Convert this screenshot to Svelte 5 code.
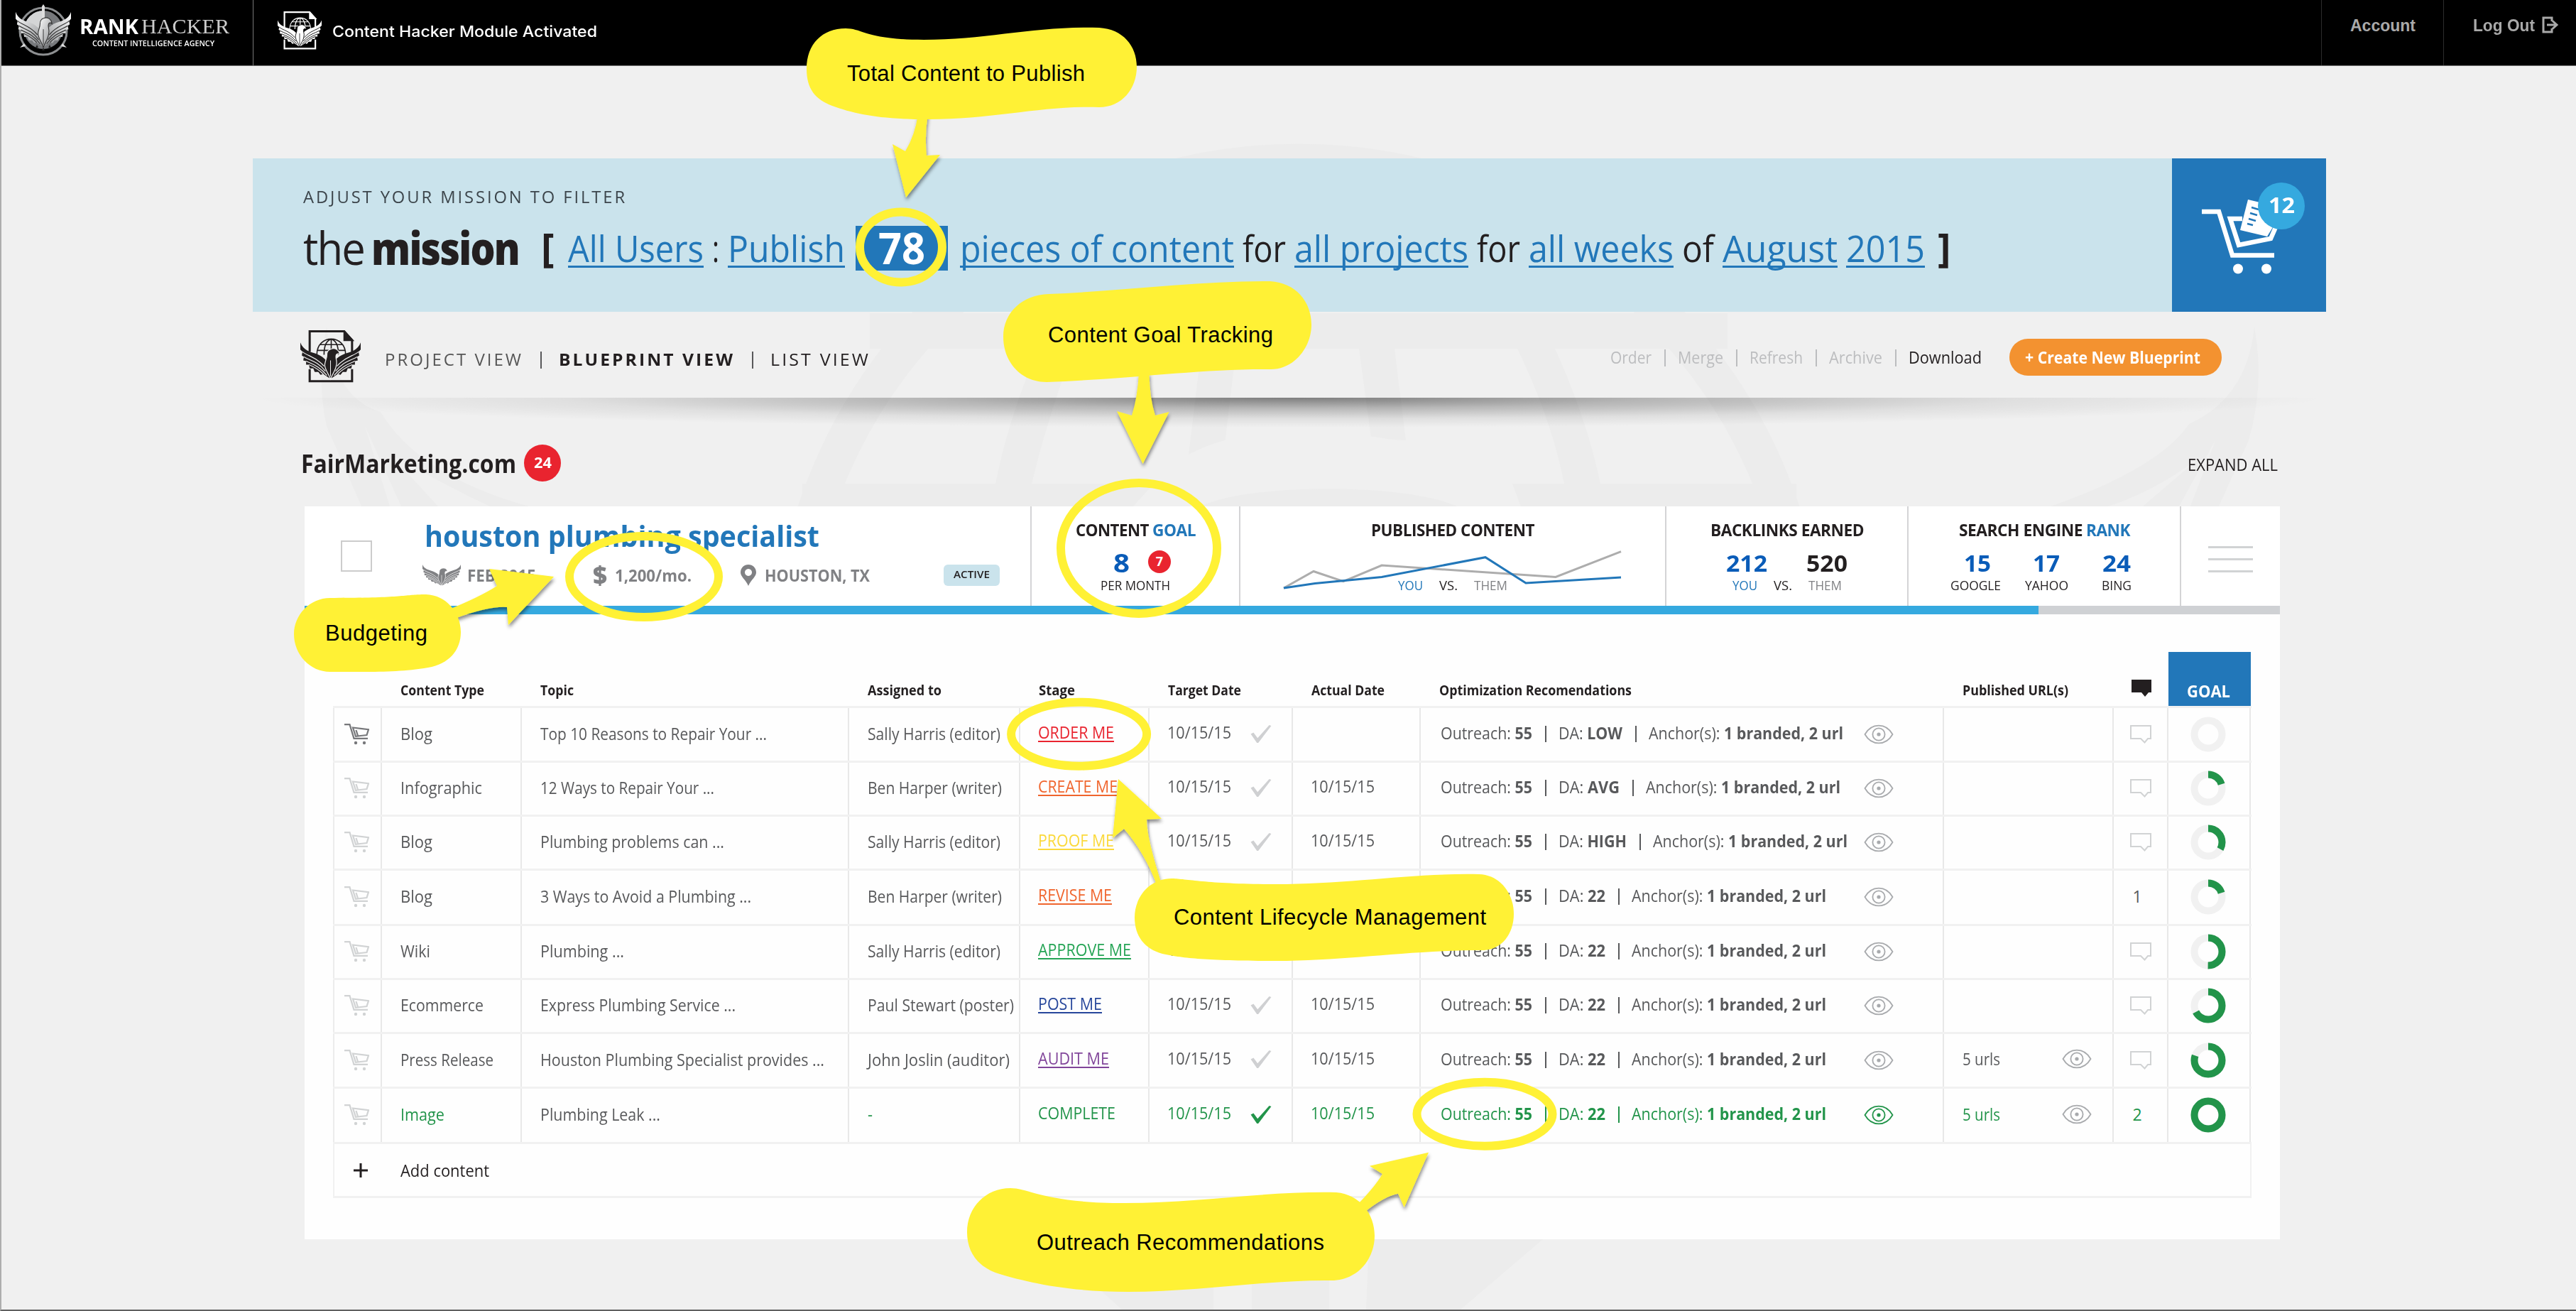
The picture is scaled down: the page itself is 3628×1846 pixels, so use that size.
<script>
  // Condenses a run of text horizontally so that it fills the given width.
  function fit(node, width) {
    node.style.width = 'max-content';
    const natural = node.getBoundingClientRect().width;
    node.style.width = `${width}px`;
    node.style.transform = `scaleX(${width / natural})`;
  }

  const mission = [
    { text: 'All Users', w: 191, link: true },
    { text: ':', w: 10 },
    { text: 'Publish', w: 165, link: true },
    { text: '78', w: 66, count: true },
    { text: 'pieces of content', w: 386, link: true },
    { text: 'for', w: 61 },
    { text: 'all projects', w: 245, link: true },
    { text: 'for', w: 61 },
    { text: 'all weeks', w: 204, link: true },
    { text: 'of', w: 45 },
    { text: 'August', w: 162, link: true },
    { text: '2015', w: 111, link: true }
  ];

  const views = [
    { text: 'PROJECT VIEW', w: 195, tone: 'light' },
    { text: 'BLUEPRINT VIEW', w: 248, tone: 'strong' },
    { text: 'LIST VIEW', w: 141, tone: 'plain' }
  ];

  const actions = [
    { text: 'Order', w: 58 },
    { text: 'Merge', w: 64 },
    { text: 'Refresh', w: 75 },
    { text: 'Archive', w: 75 },
    { text: 'Download', w: 103, on: true }
  ];

  const heads = [
    { text: '', w: 0 },
    { text: 'Content Type', w: 118 },
    { text: 'Topic', w: 47 },
    { text: 'Assigned to', w: 104 },
    { text: 'Stage', w: 51 },
    { text: 'Target Date', w: 103 },
    { text: 'Actual Date', w: 103 },
    { text: 'Optimization Recomendations', w: 271 },
    { text: 'Published URL(s)', w: 149 }
  ];

  const rows = [
    { type: 'Blog', tw: 45, topic: 'Top 10 Reasons to Repair Your ...', pw: 319, who: 'Sally Harris (editor)', ww: 187, stage: 'ORDER ME', sw: 107, color: 'red', actual: false, da: 'LOW', dw: 90, goal: 0 },
    { type: 'Infographic', tw: 115, topic: '12 Ways to Repair Your ...', pw: 245, who: 'Ben Harper (writer)', ww: 189, stage: 'CREATE ME', sw: 112, color: 'orange', actual: true, da: 'AVG', dw: 86, goal: 20 },
    { type: 'Blog', tw: 45, topic: 'Plumbing problems can ...', pw: 259, who: 'Sally Harris (editor)', ww: 187, stage: 'PROOF ME', sw: 107, color: 'yellow', actual: true, da: 'HIGH', dw: 96, goal: 33 },
    { type: 'Blog', tw: 45, topic: '3 Ways to Avoid a Plumbing ...', pw: 297, who: 'Ben Harper (writer)', ww: 189, stage: 'REVISE ME', sw: 104, color: 'orange', actual: true, da: '22', dw: 66, comments: '1', goal: 20 },
    { type: 'Wiki', tw: 42, topic: 'Plumbing ...', pw: 118, who: 'Sally Harris (editor)', ww: 187, stage: 'APPROVE ME', sw: 131, color: 'green', actual: true, da: '22', dw: 66, goal: 50 },
    { type: 'Ecommerce', tw: 117, topic: 'Express Plumbing Service ...', pw: 275, who: 'Paul Stewart (poster)', ww: 206, stage: 'POST ME', sw: 90, color: 'navy', actual: true, da: '22', dw: 66, goal: 67 },
    { type: 'Press Release', tw: 131, topic: 'Houston Plumbing Specialist provides ...', pw: 400, who: 'John Joslin (auditor)', ww: 200, stage: 'AUDIT ME', sw: 100, color: 'purple', actual: true, da: '22', dw: 66, urls: true, goal: 80 },
    { type: 'Image', tw: 62, topic: 'Plumbing Leak ...', pw: 169, who: '-', ww: 7, stage: 'COMPLETE', sw: 109, color: 'done', actual: true, da: '22', dw: 66, urls: true, comments: '2', goal: 100, done: true }
  ];

  const ring = 2 * Math.PI * 19.5;
</script>

{#snippet wing(slit)}
  <path d="M0 17 C4 28 14 30 23 33 C33 37 37 43 41 49 V67 L32 61 L28 62 L25 58 L20 58 L18 53 L13 53 L12 48 L8 48 L8 43 L4 42 L5 37 L2 35 L3 30 L0 27Z" />
  <path d="M3 30 C10 36 22 37 33 50 M5 37 C13 42 24 43 35 57 M8 43 C16 47 26 49 37 63 M12 48 C19 51 25 54 32 61" fill="none" stroke={slit} stroke-width="1.200" />
{/snippet}

{#snippet bird(slit)}
  {@render wing(slit)}
  <g transform="matrix(-1 0 0 1 84 0)">{@render wing(slit)}</g>
  <path d="M43 26 C48 24 54 27 55 34 C53 32 51 33 50 34 C48 39 52 42 50 49 C49 56 45 60 42 68 C39 60 35 56 34 49 C34 43 37 40 37 34 C37 30 39 27 43 26Z" stroke={slit} stroke-width="1.200" />
  <path d="M42 42 V64" stroke={slit} stroke-width="1" />
{/snippet}

{#snippet docBird(ink, paper)}
  <svg viewBox="0 0 84 74" fill={ink}>
    <path d="M13 30 V1.5 H61 L72 14 V30 M13 54 V71 H72 V54" fill="none" stroke={ink} stroke-width="3" />
    <path d="M61 1 V14 H73Z" stroke={ink} stroke-width="2" />
    <g fill="none" stroke={ink} stroke-width="1.600">
      <path d="M23 34 C23 5 63 5 63 34 M33 34 C33 20 37 14 43 12.500 C49 14 53 20 53 34 M43 12 V28 M28 20 H58 M24 28 H62" />
    </g>
    {@render bird(paper)}
  </svg>
{/snippet}

{#snippet cart(dark)}
  <svg class="cart" class:dark viewBox="0 0 35 30">
    <path d="M0 1.2 H7.5 L13.5 20.8 H33 M12 5.5 L34 8.2 L31.5 16 L16 17.8 Z M16.5 9 L19 17" />
    <circle cx="16" cy="27" r="2.2" /><circle cx="28" cy="27" r="2.2" />
  </svg>
{/snippet}

{#snippet eye(green)}
  <svg class="eye" class:green viewBox="0 0 42 28">
    <path d="M1.5 14 C11 -2.5 31 -2.5 40.5 14 C31 30.500 11 30.500 1.5 14Z" />
    <circle cx="21" cy="14" r="8.6" /><circle class="pupil" cx="21" cy="14" r="2.6" />
  </svg>
{/snippet}

<div class="page">
  <svg class="watermark" viewBox="0 0 3628 1846">
    <circle cx="1829" cy="945" r="717" fill="none" stroke="#ececec" stroke-width="51" />
    <path d="M1225 441 H2433 V491 H1225Z M1130 681 H2530 V730 H1130Z" />
    <path d="M1462 491 H1512 Q1475 590 1453 681 H1402 Q1420 590 1462 491Z M2137 491 H2190 Q2235 590 2254 681 H2203 Q2185 590 2137 491Z" />
    <path d="M1692 491 H1741 L1725 625 L1674 640Z M1914 491 H1964 L1980 620 L1931 617Z" />
    <path class="hole" d="M1596 713 L1625 681 Q1680 610 1830 606 Q2040 615 2130 681 L2142 713Z" />
    <path d="M1690 713 C1760 680 1980 680 2052 713Z" />
    <path d="M460 460 Q470 560 536 580 Q590 670 745 713 H690 Q640 690 550 640 L617 713 H565 L514 600 L549 713 H509 L460 600 Q445 530 460 460Z" />
    <path d="M3175 460 Q3165 560 3083 597 Q3040 660 2888 713 H2969 Q3040 690 3103 640 L3018 713 H3069 L3120 620 L3085 713 H3125 L3167 620 Q3190 540 3175 460Z" />
    <path d="M1470 1745 H1709 V1844 H1580Z M1763 1745 H1872 V1844 H1763Z M1928 1745 H2173 L2057 1844 H1924Z" />
  </svg>

  <header class="topbar">
    <div class="brand">
      <svg class="emblem" viewBox="0 0 78 74">
        <defs>
          <linearGradient id="steel" x1="0" y1="0" x2="1" y2="1">
            <stop offset="0" stop-color="#fff" /><stop offset="1" stop-color="#8b8d90" />
          </linearGradient>
        </defs>
        <circle cx="39" cy="38" r="33" fill="#000" stroke="#8d8f91" stroke-width="3" />
        <circle cx="39" cy="36" r="27" fill="#77797c" />
        <path d="M39 9 A27 27 0 0 0 12 36 H39Z" fill="#d4d5d6" />
        <path d="M37 3 L39 0 L41 3 V22 H37Z M6 61 l6 -6 2 4z M72 61 l-6 -6 -2 4z" fill="#ddd" />
        <g transform="translate(0 -6) scale(.93 .98)" fill="url(#steel)">{@render bird('#333')}</g>
        <path d="M28 61 l2 -4 2 4z M37 65 l2 -4 2 4z M46 61 l2 -4 2 4z" fill="#222" />
      </svg>
      <div class="brandtext">
        <div class="name"><b use:fit={83}>RANK</b><i use:fit={124}>HACKER</i></div>
        <div class="tag"><span use:fit={172}>CONTENT INTELLIGENCE AGENCY</span></div>
      </div>
    </div>
    <div class="module">
      <div class="docicon">{@render docBird('#fff', '#000')}</div>
      <span use:fit={373}>Content Hacker Module Activated</span>
    </div>
    <nav class="account"><span use:fit={92}>Account</span></nav>
    <nav class="logout">
      <span use:fit={87}>Log Out</span>
      <svg viewBox="0 0 24 24"><path d="M14 7 V2 H2 V22 H14 V17 M7 12 H20 M15 6.500 L21 12 L15 17.500" /></svg>
    </nav>
  </header>

  <main>
    <section class="banner">
      <div class="filter">
        <div class="hint"><span use:fit={456}>ADJUST YOUR MISSION TO FILTER</span></div>
        <div class="sentence">
          <span class="the" use:fit={86}>the</span>
          <b class="big" use:fit={208}>mission</b>
          <span class="open">[</span>
          {#each mission as m}
            {#if m.count}
              <span class="count"><b use:fit={m.w}>{m.text}</b></span>
            {:else}
              <span class:link={m.link} use:fit={m.w}>{m.text}</span>
            {/if}
          {/each}
          <span class="close">]</span>
        </div>
      </div>
      <div class="basket">
        <svg viewBox="0 0 112 106">
          <path d="M0 18 H24 L43 79.500 H102 M57 28 H40 L52 65 L97 56 L104 40" fill="none" stroke="#fff" stroke-width="6.500" />
          <path d="M65 1 L86 6 L100 40 L92 53 L54 44Z" fill="#fff" />
          <path d="M70 12 l10 3 M68 20 l10 3 M66 28 l10 3 M64 35 l8 2" stroke="#2277b9" stroke-width="2.500" />
          <circle cx="51" cy="98.500" r="7" fill="#fff" /><circle cx="91" cy="98.500" r="7" fill="#fff" />
        </svg>
        <span class="badge"><b use:fit={37}>12</b></span>
      </div>
    </section>

    <section class="toolbar">
      <div class="docicon">{@render docBird('#231f20', '#f0f0f0')}</div>
      <div class="views">
        {#each views as v, i}
          {#if i}<i></i>{/if}
          <span class={v.tone} use:fit={v.w}>{v.text}</span>
        {/each}
      </div>
      <div class="actions">
        {#each actions as a, i}
          {#if i}<i></i>{/if}
          <span class:on={a.on} use:fit={a.w}>{a.text}</span>
        {/each}
      </div>
      <button><span use:fit={247}>+ Create New Blueprint</span></button>
    </section>
    <div class="shade"></div>

    <div class="client">
      <h2 use:fit={303}>FairMarketing.com</h2>
      <span class="dot"><b use:fit={25}>24</b></span>
      <span class="expand" use:fit={127}>EXPAND ALL</span>
    </div>

    <section class="card">
      <div class="summary">
        <div class="project">
          <span class="check"></span>
          <div class="info">
            <h1 use:fit={556}>houston plumbing specialist</h1>
            <div class="meta">
              <svg class="mb" viewBox="0 17 84 51" fill="#808184" preserveAspectRatio="none">{@render bird('#fff')}</svg>
              <span use:fit={97}>FEB 2015</span>
              <b class="dollar" use:fit={20}>$</b>
              <span use:fit={108}>1,200/mo.</span>
              <svg class="pin" viewBox="0 0 22 30"><path fill-rule="evenodd" d="M11 0 C17 0 22 4.500 22 11 C22 17 15 21 11 30 C7 21 0 17 0 11 C0 4.500 5 0 11 0Z M11 6 a5 5 0 1 0 .01 0Z" fill="#808184" /></svg>
              <span use:fit={148}>HOUSTON, TX</span>
            </div>
          </div>
          <span class="active"><span use:fit={51}>ACTIVE</span></span>
        </div>

        <div class="stat">
          <h3><span use:fit={103}>CONTENT</span><em use:fit={61}>GOAL</em></h3>
          <div class="nums goalnums"><b class="blue" use:fit={23}>8</b><span class="seven">7</span></div>
          <div class="labels"><span use:fit={98}>PER MONTH</span></div>
        </div>

        <div class="stat chart">
          <h3><span use:fit={230}>PUBLISHED CONTENT</span></h3>
          <svg viewBox="0 0 478 56">
            <path d="M1 53 L43 29.500 L85 43.700 L139 21 L384 37.500 L476 1.700" stroke="#adadad" />
            <path d="M1 53 L45 46.500 L139 37.500 L285 9.700 L342 46 L476 38" stroke="#2277b9" />
          </svg>
          <div class="labels vs"><span class="you" use:fit={35}>YOU</span><span use:fit={26}>VS.</span><span class="them" use:fit={47}>THEM</span></div>
        </div>

        <div class="stat">
          <h3><span use:fit={216}>BACKLINKS EARNED</span></h3>
          <div class="nums links"><b class="blue" use:fit={58}>212</b><b use:fit={58}>520</b></div>
          <div class="labels vs"><span class="you" use:fit={35}>YOU</span><span use:fit={26}>VS.</span><span class="them" use:fit={47}>THEM</span></div>
        </div>

        <div class="stat">
          <h3><span use:fit={174}>SEARCH ENGINE</span><em use:fit={62}>RANK</em></h3>
          <div class="ranks">
            <div><b class="first" use:fit={38}>15</b><span use:fit={71}>GOOGLE</span></div>
            <div><b use:fit={38}>17</b><span use:fit={61}>YAHOO</span></div>
            <div><b use:fit={40}>24</b><span use:fit={42}>BING</span></div>
          </div>
        </div>

        <div class="burger"><i></i><i></i><i></i></div>
      </div>
      <div class="progress"><div></div></div>

      <div class="table">
        <div class="row head">
          {#each heads as h}
            <div>{#if h.text}<b use:fit={h.w}>{h.text}</b>{/if}</div>
          {/each}
          <div class="mid"><svg class="filled" viewBox="0 0 28 24"><path d="M0 0 H28 V18 H24 L19 24 L14 18 H0Z" /></svg></div>
          <div class="goalhead"><b use:fit={61}>GOAL</b></div>
        </div>
        <div class="body">
          {#each rows as r}
            <div class="row" class:done={r.done}>
              <div class="mid">{@render cart(r === rows[0])}</div>
              <div class="type"><span use:fit={r.tw}>{r.type}</span></div>
              <div><span use:fit={r.pw}>{r.topic}</span></div>
              <div class="type"><span use:fit={r.ww}>{r.who}</span></div>
              <div class="high"><span class="stage {r.color}" use:fit={r.sw}>{r.stage}</span></div>
              <div class="high tint">
                <span use:fit={90}>10/15/15</span>
                <svg class="tick" viewBox="0 0 32 28"><path d="M1 14 L5 12 L11 20 L28 1 L31 2 L12 27 L10 27Z" /></svg>
              </div>
              <div class="high tint">{#if r.actual}<span use:fit={90}>10/15/15</span>{/if}</div>
              <div class="reco tint">
                <span use:fit={129}>Outreach: <b>55</b></span><i></i>
                <span use:fit={r.dw}>DA: <b>{r.da}</b></span><i></i>
                <span use:fit={274}>Anchor(s): <b>1 branded, 2 url</b></span>
                <span class="look">{@render eye(r.done)}</span>
              </div>
              <div class="urls tint">
                {#if r.urls}<span use:fit={53}>5 urls</span>{@render eye(false)}{/if}
              </div>
              <div class="mid tint">
                {#if r.comments}
                  <span class="num">{r.comments}</span>
                {:else}
                  <svg class="bubble" viewBox="0 0 30 26"><path d="M1 1 H29 V19 H25 L20.500 24.500 L15 19 H1Z" /></svg>
                {/if}
              </div>
              <div class="mid">
                <svg class="donut" viewBox="0 0 50 50">
                  <circle cx="25" cy="25" r="19.500" stroke="#f1f1f1" />
                  {#if r.goal}
                    <circle cx="25" cy="25" r="19.500" stroke="#22944a" stroke-dasharray="{(ring * r.goal) / 100} {ring}" transform="rotate(-90 25 25)" />
                  {/if}
                </svg>
              </div>
            </div>
          {/each}
        </div>
        <div class="add">
          <svg viewBox="0 0 20 20"><path d="M10 0 V20 M0 10 H20" stroke="#231f20" stroke-width="3" /></svg>
          <span use:fit={125}>Add content</span>
        </div>
      </div>
    </section>
  </main>

  <svg class="notes" viewBox="0 0 3628 1846">
    <defs>
      <filter id="lift" x="-20%" y="-20%" width="140%" height="150%">
        <feDropShadow dx="1" dy="4" stdDeviation="2.500" flood-color="#000" flood-opacity=".45" />
      </filter>
    </defs>
    <g class="rings">
      <ellipse cx="1269" cy="348" rx="58" ry="49.500" />
      <ellipse cx="1604" cy="772" rx="110" ry="92" />
      <ellipse cx="907" cy="812" rx="105" ry="57" />
      <ellipse cx="1519.600" cy="1033.700" rx="95.500" ry="45" />
      <ellipse cx="2091" cy="1568.700" rx="95.500" ry="45" />
    </g>
    <g class="fill" filter="url(#lift)">
      <path d="M1293 160 Q1289 190 1275 213 L1257 203 L1276 278 L1324 218 L1305 219 Q1302 190 1307 160Z" />
      <path d="M1604 525 Q1602 560 1594 585 L1573 579 L1609.600 653 L1646.600 580 L1627 585 Q1619 560 1618.500 525Z" />
      <path d="M630 859 Q675 841 700 825 L689 801 L780 812 L716 880 L714 855 Q690 853 640 871Z" />
      <path d="M1575 1097 L1636 1152.700 L1615 1154 Q1615 1180 1637 1248 H1630 Q1612 1200 1583 1167 L1567 1180Z" />
      <path d="M1908 1700 Q1936 1672 1947 1653 L1929 1641.700 L2012 1622.700 L1977.700 1700 L1969 1680.700 Q1950 1684 1920 1708Z" />
    </g>
    <g class="fill">
      <path d="M1136 97 C1136 62 1158 40 1191 40 C1215 40 1220 56 1301 56 C1390 56 1460 36 1548 39 C1582 41 1601 65 1601 94 C1601 125 1580 151 1548 151 C1470 148 1400 168 1307 168 C1240 168 1205 161 1172 149 C1148 140 1136 125 1136 97Z" />
      <path d="M1413 474 C1413 440 1440 415 1477 414 C1580 410 1690 395 1789 396 C1825 398 1847 425 1847 457 C1847 490 1822 520 1790 520 C1690 519 1590 534 1474 538 C1438 538 1413 510 1413 474Z" />
      <path d="M414 893 C414 866 436 842 465 842 C570 842 570 837 600 837 C628 838 649 862 649 890 C649 916 632 935 603 940 C560 947 530 946 465 946 C436 946 414 921 414 893Z" />
      <path d="M1598 1292 C1598 1262 1620 1237 1650 1237 C1668 1237 1700 1245 1796 1245 C1900 1245 1990 1229 2083 1231 C2113 1232 2132 1258 2132 1287 C2132 1315 2115 1337 2090 1338 C1980 1338 1900 1353 1796 1353 C1700 1353 1665 1349 1637 1343 C1612 1336 1598 1318 1598 1292Z" />
      <path d="M1362 1735 C1362 1700 1388 1673 1423 1673 C1450 1673 1470 1694 1584 1694 C1690 1694 1780 1677 1882 1679 C1916 1682 1936 1710 1936 1740 C1936 1773 1912 1803 1875 1803 C1780 1802 1690 1819 1588 1819 C1500 1819 1440 1804 1402 1792 C1376 1782 1362 1762 1362 1735Z" />
    </g>
    <g class="captions">
      <text x="1193" y="114" textLength="335">Total Content to Publish</text>
      <text x="1476" y="482" textLength="317">Content Goal Tracking</text>
      <text x="458" y="901.500" textLength="144">Budgeting</text>
      <text x="1653" y="1301.500" textLength="440">Content Lifecycle Management</text>
      <text x="1460" y="1760" textLength="405">Outreach Recommendations</text>
    </g>
  </svg>
</div>

<style>
  :global(body) { background: #f0f0f0; }
  * { box-sizing: border-box; }
  span, b, i, em, h1, h2 { transform-origin: 0 50%; }
  h1, h2, h3 { margin: 0; }
  svg { display: block; }
  .page {
    position: relative; width: 3628px; height: 1846px; overflow: hidden;
    background: #f0f0f0; border-left: 2px solid #aeaeae; border-bottom: 2px solid #606060;
    font-family: 'Open Sans', 'Noto Sans', sans-serif; color: #231f20; white-space: nowrap;
  }
  .watermark, .notes { position: absolute; left: -2px; top: 0; width: 3628px; height: 1846px; pointer-events: none; }
  .watermark { fill: #ececec; }
  .watermark .hole { fill: #f0f0f0; }

  .topbar { position: relative; display: flex; height: 93px; background: #000; border-bottom: 1px solid #777; color: #fff; }
  .brand { display: flex; width: 355px; padding-left: 20px; border-right: 1px solid #777; }
  .emblem { width: 78px; height: 74px; margin-top: 6px; }
  .brandtext { padding: 22px 0 0 12px; }
  .name { display: flex; gap: 4px; height: 30px; line-height: 30px; font-size: 28px; }
  .name b { font-weight: 700; }
  .name i { font: normal 30px/30px 'Liberation Serif', serif; color: #ccc; }
  .tag { padding-left: 18px; margin-top: 1px; font-weight: 600; font-size: 11.500px; line-height: 16px; display: flex; }
  .module { display: flex; align-items: center; gap: 15px; padding: 0 0 5px 34px; flex: 1; font-size: 22px; font-weight: 500; font-family: Inter, 'Open Sans', sans-serif; }
  .module .docicon { width: 62px; }
  .account, .logout { display: flex; border-left: 1px solid #2c2c2c; font: 600 23px/26px 'Liberation Sans', sans-serif; color: #a9a9a9; padding-top: 23px; }
  .account { width: 172px; padding-left: 40px; }
  .logout { width: 187px; padding-left: 41px; gap: 10px; }
  .logout svg { width: 24px; height: 24px; fill: none; stroke: #a9a9a9; stroke-width: 3; }

  main { position: relative; padding: 130px 0 0 354px; }
  .banner { display: flex; width: 2920px; height: 216px; background: #cae3ec; }
  .filter { flex: 1; padding: 36px 0 0 71px; }
  .hint { display: flex; font-size: 24.500px; line-height: 36px; letter-spacing: 3px; color: #3c454b; }
  .sentence { display: flex; gap: 12px; height: 80px; margin-top: 14px; font-size: 51px; line-height: 80px; }
  .sentence .the { font-size: 64px; line-height: 80px; letter-spacing: -2px; }
  .sentence .big { font-size: 64px; font-weight: 800; letter-spacing: -2px; margin-right: 19px; margin-left: -2px; }
  .open, .close { font-size: 56px; font-weight: 700; width: 22px; margin: 0 4px 0 0; line-height: 76px; }
  .close { margin-left: 6px; }
  .link { color: #2277b9; text-decoration: underline; text-decoration-thickness: 3px; text-underline-offset: 5px; text-decoration-skip-ink: none; }
  .count { display: flex; justify-content: center; width: 130px; height: 63px; margin: 9px 5px 0 3px; background: #2277b9; color: #fff; font-size: 60px; line-height: 62px; }
  .basket { position: relative; width: 217px; background: #2277b9; color: #fff; padding: 57px 0 0 42px; }
  .basket svg { width: 112px; height: 106px; }
  .badge { position: absolute; left: 121px; top: 34px; display: flex; justify-content: center; width: 66px; height: 66px; border-radius: 50%; background: #35a9df; font-size: 31px; line-height: 63px; }

  .toolbar { display: flex; align-items: center; height: 121px; padding: 4px 0 0 67px; font-size: 24px; line-height: 36px; }
  .toolbar .docicon { width: 85px; margin-top: 2px; }
  .views, .actions { display: flex; align-items: center; }
  .views { margin-left: 34px; gap: 24px; letter-spacing: 3px; margin-top: 8px; width: 726px; }
  .views i, .actions i { width: 2px; height: 24px; background: #58585a; margin-top: 2px; }
  .views .light { color: #555; }
  .views .strong { font-weight: 700; }
  .actions { gap: 17.500px; margin: 2px 0 0 1000px; color: #bcbdbf; }
  .actions i { background: #bcbdbf; }
  .actions .on { color: #231f20; }
  button { width: 299px; height: 52px; margin: 2px 0 0 39px; padding: 0 0 0 22px; display: flex; align-items: center; border: 0; border-radius: 26px; background: #f39230; color: #fff; font: 700 24px/48px 'Open Sans', sans-serif; }
  .shade { width: 2920px; height: 42px; background: radial-gradient(ellipse 50% 100% at 50% 0, rgba(0,0,0,.48), rgba(0,0,0,.24) 35%, rgba(0,0,0,.07) 70%, transparent); }

  .client { display: flex; align-items: center; width: 2852px; padding-left: 68px; height: 60px; margin: 21px 0 30px; }
  .client h2 { font-size: 35px; font-weight: 700; line-height: 60px; }
  .dot { display: flex; justify-content: center; width: 52px; height: 52px; margin: 0 0 2px 11px; border-radius: 50%; background: #e9242f; color: #fff; font-size: 21px; line-height: 51px; }
  .expand { margin: 1px 0 0 auto; font-size: 24px; }

  .card { width: 2782px; height: 1032px; margin-left: 73px; background: #fefefe; }
  .summary { display: grid; grid-template-columns: 1024px 294px 600px 341px 384px 139px; height: 140px; background: #fff; }
  .summary > div { border-right: 2px solid #d4d4d6; }
  .summary > .burger { border: 0; }
  .project { display: flex; }
  .check { width: 44px; height: 44px; margin: 48px 0 0 51px; border: 2px solid #ccc; }
  .info { margin-left: 74px; width: 731px; }
  h1 { font-size: 41.500px; font-weight: 700; line-height: 56px; color: #2277b9; margin-top: 13px; }
  .meta { display: flex; align-items: center; height: 34px; margin: 11px 0 0 -3px; color: #808184; font-size: 24px; font-weight: 700; line-height: 34px; }
  .mb { width: 54px; height: 30px; margin-right: 9px; }
  .dollar { margin: 0 11px 0 80px; font-size: 36px; }
  .pin { width: 22px; height: 30px; margin: 0 12px 0 69px; }
  .active { width: 79px; height: 30px; margin-top: 82px; display: flex; justify-content: center; border-radius: 6px; background: #cae3ec; font-size: 14px; font-weight: 600; line-height: 27px; }
  .stat { position: relative; display: flex; flex-direction: column; align-items: center; }
  h3 { display: flex; gap: 5px; margin-top: 18px; font-size: 23.500px; line-height: 30px; font-weight: 700; letter-spacing: -.5px; }
  h3 em { font-style: normal; color: #2277b9; }
  .nums { display: flex; height: 40px; margin-top: 12px; font-size: 33px; line-height: 40px; }
  .links { gap: 55px; }
  .blue { color: #0a5cb8; }
  .goalnums { gap: 26px; padding-left: 19px; font-size: 35px; }
  .seven { width: 32px; height: 32px; margin-top: 2px; border-radius: 50%; background: #e9242f; color: #fff; font-size: 18px; font-weight: 700; line-height: 31px; text-align: center; }
  .labels { display: flex; gap: 23px; height: 26px; margin-top: -2px; font-size: 18.500px; line-height: 26px; }
  .you { color: #2277b9; }
  .them { color: #808184; }
  .chart svg { width: 478px; height: 56px; margin-top: 14px; fill: none; stroke-width: 3; }
  .chart .labels { margin-top: -20px; }
  .ranks { display: grid; grid-template-columns: 100px 100px 98px; margin-top: 12px; padding-left: 4px; }
  .ranks div { display: flex; flex-direction: column; align-items: center; }
  .ranks b { color: #0a5cb8; font-size: 33px; line-height: 40px; }
  .ranks .first { margin-left: 6px; }
  .ranks span { font-size: 18.500px; line-height: 26px; margin-top: -2px; }
  .burger { display: flex; flex-direction: column; gap: 14px; padding: 56px 0 0 38px; }
  .burger i { width: 63px; height: 3px; background: #d1d3d4; }
  .progress { height: 12px; background: #cfd1d4; }
  .progress div { width: 2442px; height: 12px; background: #35a9df; }

  .table { width: 2702px; margin: 53px 0 0 40px; color: #58595b; }
  .row { display: grid; grid-template-columns: 69px 197px 461px 241px 182px 202px 180px 737px 239px 77px 116px; }
  .row > div { display: flex; align-items: center; padding-left: 26px; font-size: 23px; line-height: 34px; border-right: 2px solid #e8e8e8; }
  .row > .mid { padding: 0; justify-content: center; }
  .head { height: 76px; }
  .head > div { border: 0; align-items: flex-end; padding-bottom: 5px; font-size: 19px; color: #231f20; }
  .head > .mid { align-items: flex-end; padding-bottom: 13px; }
  .filled { width: 28px; height: 24px; fill: #231f20; }
  .head > .goalhead { background: #2277b9; color: #fff; font-size: 24px; padding-bottom: 4px; }
  .body { display: grid; grid-template-rows: 77px 75.500px 76.500px 77.500px 76.500px 75.500px 77px 78.500px; border-left: 2px solid #ececec; }
  .body .row { margin-left: -2px; border-top: 3px solid #f1f1f1; }
  .body .row > .high { padding: 0 0 6px 25px; }
  .body .row > .reco { padding: 0 0 4px 28px; }
  .body .row > .type, .body .row > div:nth-child(3) { padding-bottom: 2px; }
  .cart { width: 35px; height: 30px; fill: none; stroke: #d1d3d4; stroke-width: 2.200; }
  .cart.dark { stroke: #77787b; }
  .cart circle { fill: #d1d3d4; stroke: none; }
  .cart.dark circle { fill: #77787b; }
  .stage { text-decoration: underline; text-decoration-thickness: 2px; text-underline-offset: 3px; }
  .red { color: #e9242f; }
  .orange { color: #f0652d; }
  .yellow { color: #fbd93b; }
  .green { color: #25a455; }
  .navy { color: #27479b; }
  .purple { color: #81459a; }
  .stage.done { color: #22944a; text-decoration: none; }
  .tick { width: 32px; height: 27px; margin: 4px 0 0 26px; fill: #cfd0d2; }
  .reco i { width: 2px; height: 23px; background: #58595b; margin: 3px 17.500px 0; }
  .look { margin: 4px 0 0 auto; padding-right: 69px; }
  .eye { width: 42px; height: 28px; fill: none; stroke: #a8aaad; stroke-width: 1.800; }
  .eye .pupil { fill: #a8aaad; stroke: none; }
  .eye.green { stroke: #22944a; }
  .eye.green .pupil { fill: #22944a; }
  .urls .eye { margin-left: 87px; }
  .row > .urls { padding-bottom: 3px; }
  .num { margin-right: 9px; padding-bottom: 3px; }
  .bubble { width: 30px; height: 26px; fill: none; stroke: #d1d3d4; stroke-width: 2; }
  .donut { width: 50px; height: 50px; fill: none; stroke-width: 10; margin-right: 3px; }
  .row.done .tint, .row.done .type { color: #22944a; }
  .row.done .reco i { background: #22944a; }
  .row.done .tick { fill: #22944a; }
  .add { display: flex; align-items: center; height: 79px; border: 2px solid #f1f1f1; border-top-width: 3px; border-bottom-width: 3px; padding-left: 27px; font-size: 23px; line-height: 34px; color: #231f20; }
  .add svg { width: 20px; height: 20px; margin-right: 46px; }

  .rings { fill: none; stroke: #fff135; stroke-width: 12; }
  .fill { fill: #fff135; }
  .captions { font: 31px 'Liberation Sans', Arial, sans-serif; fill: #000; }
</style>
